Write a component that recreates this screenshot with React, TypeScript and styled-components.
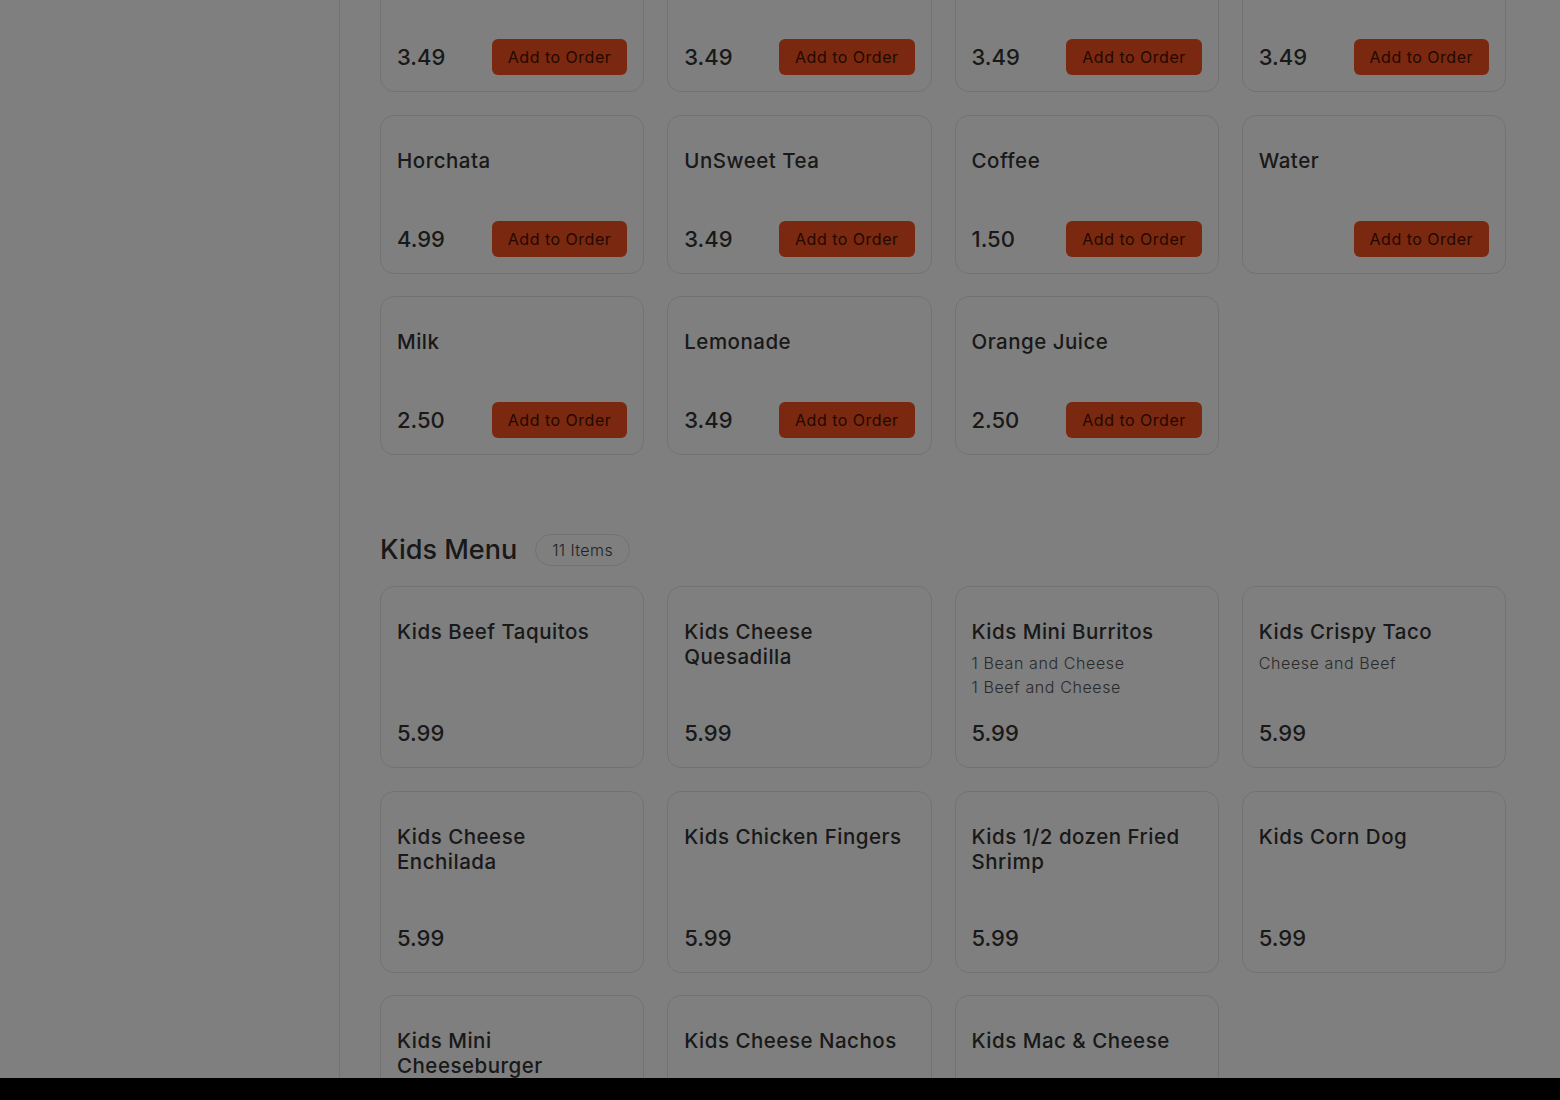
import React, { useLayoutEffect, useRef } from 'react';
import styled, { createGlobalStyle } from 'styled-components';

type Item = {
  name: string;
  price?: string;
  description?: string[];
};

const drinks: Item[] = [
  { name: 'Coke', price: '3.49' },
  { name: 'Diet Coke', price: '3.49' },
  { name: 'Sprite', price: '3.49' },
  { name: 'Sweet Tea', price: '3.49' },
  { name: 'Horchata', price: '4.99' },
  { name: 'UnSweet Tea', price: '3.49' },
  { name: 'Coffee', price: '1.50' },
  { name: 'Water' },
  { name: 'Milk', price: '2.50' },
  { name: 'Lemonade', price: '3.49' },
  { name: 'Orange Juice', price: '2.50' },
];

const kids: Item[] = [
  { name: 'Kids Beef Taquitos', price: '5.99' },
  { name: 'Kids Cheese Quesadilla', price: '5.99' },
  {
    name: 'Kids Mini Burritos',
    price: '5.99',
    description: ['1 Bean and Cheese', '1 Beef and Cheese'],
  },
  { name: 'Kids Crispy Taco', price: '5.99', description: ['Cheese and Beef'] },
  { name: 'Kids Cheese Enchilada', price: '5.99' },
  { name: 'Kids Chicken Fingers', price: '5.99' },
  { name: 'Kids 1/2 dozen Fried Shrimp', price: '5.99' },
  { name: 'Kids Corn Dog', price: '5.99' },
  { name: 'Kids Mini Cheeseburger', price: '5.99' },
  { name: 'Kids Cheese Nachos', price: '5.99' },
  { name: 'Kids Mac & Cheese', price: '5.99' },
];

const GlobalStyle = createGlobalStyle`
  * { box-sizing: border-box; }
  html, body {
    margin: 0;
    padding: 0;
    height: 100%;
    overflow: hidden;
  }
  body {
    font-family: Inter, "Noto Sans", sans-serif;
    color: #333;
    background: #fff;
  }
`;

const MenuCard = ({ item, orderable, anchor }: { item: Item; orderable: boolean; anchor?: boolean }) => (
  <Card data-anchor={anchor ? 'true' : undefined}>
    <CardBody>
      <ItemName>{item.name}</ItemName>
      {item.description?.map(line => (
        <Description key={line}>{line}</Description>
      ))}
    </CardBody>
    <PriceRow>
      <Price>{item.price}</Price>
      {orderable && <AddButton>Add to Order</AddButton>}
    </PriceRow>
  </Card>
);

const MenuSection = ({ title, items, orderable }: { title: string; items: Item[]; orderable: boolean }) => (
  <Section>
    <SectionHeader>
      <SectionTitle>{title}</SectionTitle>
      <CountPill>{items.length} Items</CountPill>
    </SectionHeader>
    <CardGrid>
      {items.map((item, i) => (
        <MenuCard key={item.name} item={item} orderable={orderable} anchor={orderable && i === 4} />
      ))}
    </CardGrid>
  </Section>
);

const App = () => {
  const mainRef = useRef<HTMLDivElement>(null);

  // page is shown scrolled down to the drinks list
  useLayoutEffect(() => {
    const main = mainRef.current;
    const anchor = main?.querySelector('[data-anchor]');
    if (main && anchor) {
      main.scrollTop += anchor.getBoundingClientRect().top - 115;
    }
  }, []);

  return (
    <>
      <GlobalStyle />
      <Layout>
        <Sidebar />
        <Main ref={mainRef}>
          <MenuSection title="Drinks" items={drinks} orderable />
          <MenuSection title="Kids Menu" items={kids} orderable={false} />
        </Main>
      </Layout>
      <Backdrop />
      <BottomSheet />
    </>
  );
};

const Layout = styled.div`
  display: flex;
  height: 100vh;
  overflow: hidden;
`;

const Sidebar = styled.aside`
  flex: 0 0 340px;
  height: 100%;
  border-right: 1px solid #e6e6e6;
  background: #fff;
`;

const Main = styled.main`
  flex: 1;
  height: 100%;
  overflow-y: auto;
  padding: 40px 54px 80px 40px;
  scrollbar-width: none;

  &::-webkit-scrollbar {
    display: none;
  }
`;

const Section = styled.section`
  & + & {
    margin-top: 79px;
  }
`;

const SectionHeader = styled.div`
  display: flex;
  align-items: center;
  gap: 18px;
  height: 32px;
  margin-bottom: 20px;
`;

const SectionTitle = styled.h2`
  margin: 0;
  font-size: 27px;
  font-weight: 500;
  line-height: 32px;
  color: #333;
`;

const CountPill = styled.span`
  display: inline-flex;
  align-items: center;
  height: 32px;
  padding: 0 16px;
  border: 1px solid #e4e4e4;
  border-radius: 16px;
  font-size: 16px;
  font-weight: 300;
  letter-spacing: 0.4px;
  color: #444;
`;

const CardGrid = styled.div`
  display: grid;
  grid-template-columns: repeat(4, 1fr);
  grid-auto-rows: 1fr;
  column-gap: 23px;
  row-gap: 22.5px;
`;

const Card = styled.div`
  display: flex;
  flex-direction: column;
  padding: 32px 16px 16px;
  border: 1px solid #e4e4e4;
  border-radius: 14px;
  background: #fff;
`;

const CardBody = styled.div`
  flex: 1;
  min-height: 57px;
`;

const ItemName = styled.h3`
  margin: 0;
  padding-right: 4px;
  font-size: 20.5px;
  font-weight: 500;
  letter-spacing: 0.5px;
  line-height: 25px;
  color: #333;
`;

const Description = styled.p`
  margin: 0;
  font-size: 16px;
  font-weight: 300;
  letter-spacing: 0.6px;
  line-height: 24px;
  color: #555;

  ${ItemName} + & {
    margin-top: 7px;
  }
`;

const PriceRow = styled.div`
  display: flex;
  align-items: center;
  justify-content: space-between;
  height: 36px;
  margin-top: 16px;
`;

const Price = styled.span`
  font-size: 22px;
  font-weight: 500;
  color: #333;
`;

const AddButton = styled.button`
  height: 36px;
  padding: 0 16px;
  border: none;
  border-radius: 6px;
  background: #f4511e;
  color: #4a1200;
  font-family: inherit;
  font-size: 16px;
  font-weight: 400;
  letter-spacing: 0.5px;
  cursor: pointer;
`;

const Backdrop = styled.div`
  position: fixed;
  inset: 0;
  background: rgba(0, 0, 0, 0.5);
`;

const BottomSheet = styled.div`
  position: fixed;
  left: 0;
  right: 0;
  bottom: 0;
  height: 22px;
  background: #000;
`;

export default App;
